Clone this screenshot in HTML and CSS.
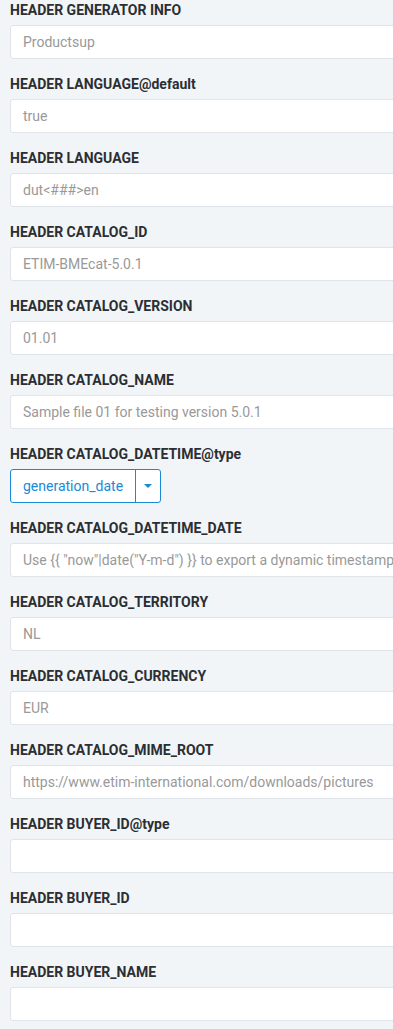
FILE: index.html
```html
<!DOCTYPE html>
<html>
<head>
<meta charset="utf-8">
<link rel="stylesheet" href="styles.css">
</head>
<body>
<div class="form">
  <div class="field"><div class="label">HEADER GENERATOR INFO</div><div class="input">Productsup</div></div>
  <div class="field"><div class="label">HEADER LANGUAGE@default</div><div class="input">true</div></div>
  <div class="field"><div class="label">HEADER LANGUAGE</div><div class="input">dut&lt;###&gt;en</div></div>
  <div class="field"><div class="label">HEADER CATALOG_ID</div><div class="input">ETIM-BMEcat-5.0.1</div></div>
  <div class="field"><div class="label">HEADER CATALOG_VERSION</div><div class="input">01.01</div></div>
  <div class="field"><div class="label">HEADER CATALOG_NAME</div><div class="input">Sample file 01 for testing version 5.0.1</div></div>
  <div class="field"><div class="label">HEADER CATALOG_DATETIME@type</div>
    <div class="select"><span class="select-value">generation_date</span><span class="select-caret"><svg width="8" height="4" viewBox="0 0 8 4"><path d="M0 0h8L4 4z" fill="#1a8ad8"/></svg></span></div>
  </div>
  <div class="field"><div class="label">HEADER CATALOG_DATETIME_DATE</div><div class="input">Use {{ "now"|date("Y-m-d") }} to export a dynamic timestamp</div></div>
  <div class="field"><div class="label">HEADER CATALOG_TERRITORY</div><div class="input">NL</div></div>
  <div class="field"><div class="label">HEADER CATALOG_CURRENCY</div><div class="input">EUR</div></div>
  <div class="field"><div class="label">HEADER CATALOG_MIME_ROOT</div><div class="input">https://www.etim-international.com/downloads/pictures</div></div>
  <div class="field"><div class="label">HEADER BUYER_ID@type</div><div class="input"></div></div>
  <div class="field"><div class="label">HEADER BUYER_ID</div><div class="input"></div></div>
  <div class="field"><div class="label">HEADER BUYER_NAME</div><div class="input"></div></div>
</div>
</body>
</html>
```
FILE: styles.css
```css
html, body {
  margin: 0;
  padding: 0;
  background: #f2f5f8;
  overflow: hidden;
}
body {
  font-family: Roboto, "Liberation Sans", sans-serif;
  width: 393px;
  height: 1029px;
}
.form {
  padding-left: 10px;
  overflow: hidden;
}
.field {
  height: 74px;
}
.label {
  font-size: 14px;
  font-weight: 700;
  color: #2b2f33;
  line-height: 20px;
  height: 20px;
  margin-bottom: 5px;
  white-space: nowrap;
}
.input {
  box-sizing: border-box;
  width: calc(100% + 10px);
  height: 34px;
  background: #fff;
  border: 1px solid #dfe4ea;
  border-radius: 3px;
  padding: 0 12px;
  font-size: 14px;
  line-height: 32px;
  color: #999;
  white-space: nowrap;
  overflow: hidden;
}
.select {
  box-sizing: border-box;
  display: inline-flex;
  height: 34px;
  border: 1px solid #1a8ad8;
  border-radius: 3px;
  background: #fff;
  color: #1a8ad8;
  font-size: 14px;
}
.select-value {
  display: flex;
  align-items: center;
  padding: 0 12px;
  border-right: 1px solid #1a8ad8;
  width: 125px;
  box-sizing: border-box;
}
.select-caret {
  display: flex;
  align-items: center;
  justify-content: center;
  width: 24px;
}
```
